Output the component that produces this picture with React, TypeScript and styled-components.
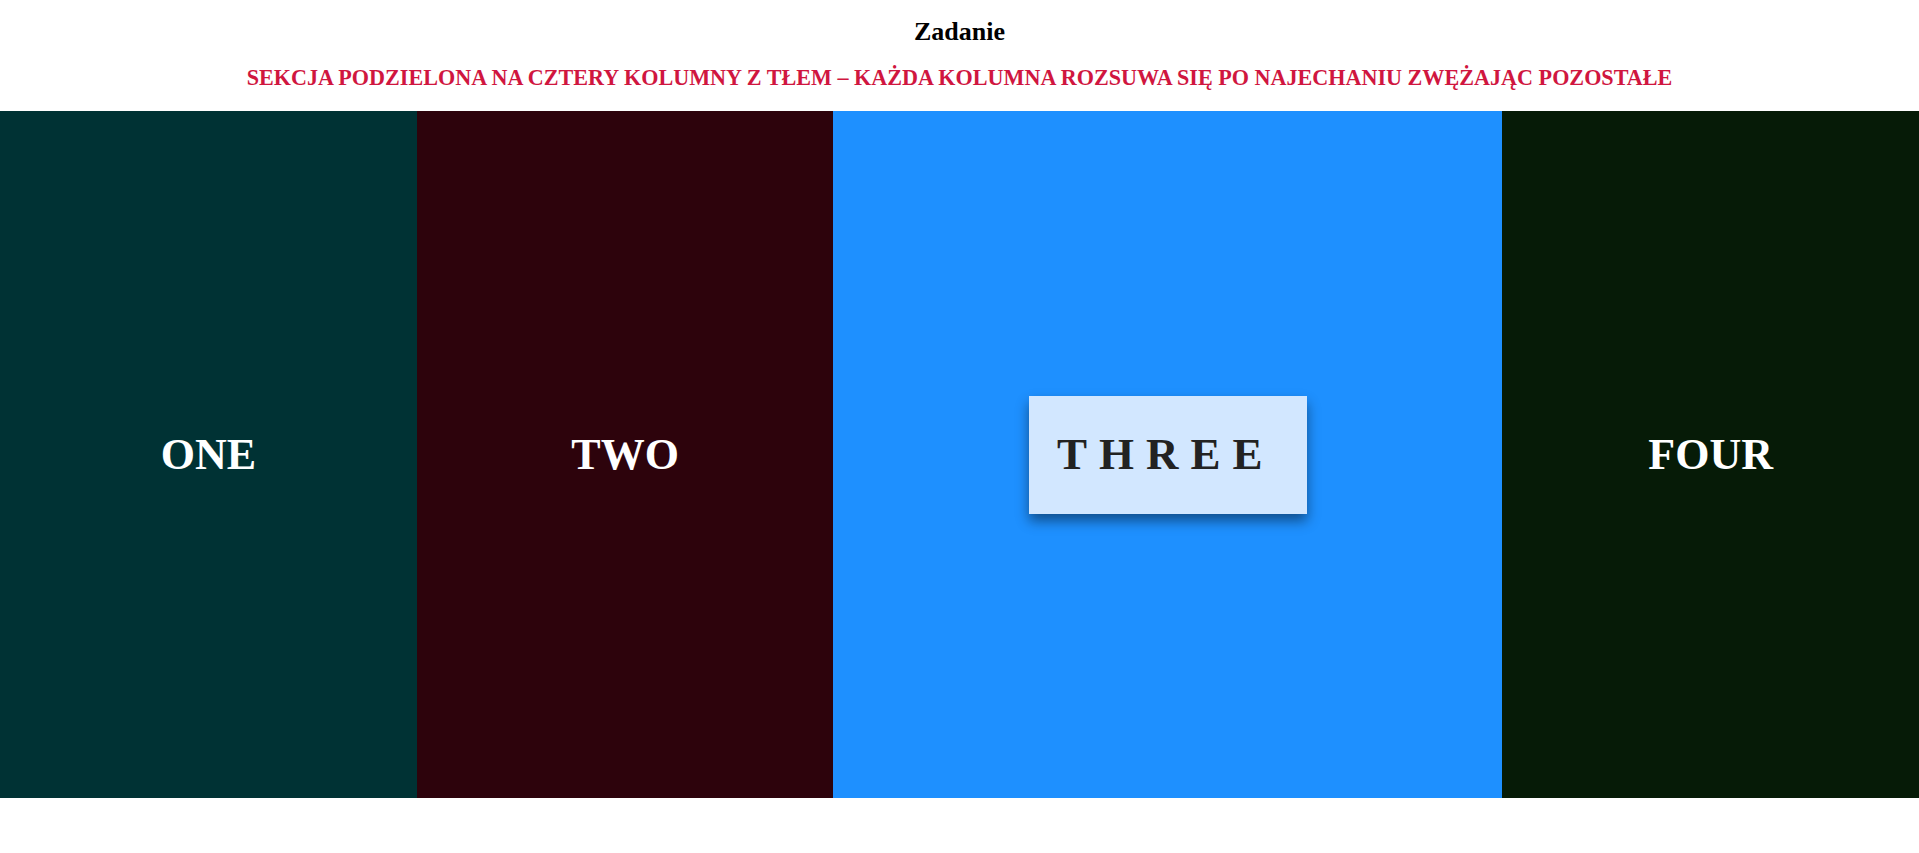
import React from "react";
import styled, { createGlobalStyle } from "styled-components";

const GlobalStyle = createGlobalStyle`
  html, body {
    margin: 0;
    padding: 0;
    background: #ffffff;
    font-family: "Liberation Serif", "Times New Roman", serif;
  }
`;

const Header = styled.header`
  display: flex;
  flex-direction: column;
  align-items: center;
  padding-top: 17px;
`;

const Title = styled.h1`
  margin: 0;
  font-size: 26px;
  font-weight: 700;
  color: #000;
  line-height: 1.15;
`;

const Subtitle = styled.h2`
  margin: 18px 0 21px;
  font-size: 22.15px;
  font-weight: 700;
  color: #d0163f;
  line-height: 1.15;
  text-transform: uppercase;
`;

const Section = styled.section`
  display: flex;
  height: 687px;
`;

const Column = styled.div<{ $bg: string; $grow: number }>`
  flex: ${(p) => p.$grow} 1 0;
  background: ${(p) => p.$bg};
  display: flex;
  align-items: center;
  justify-content: center;
  transition: flex 0.5s ease;
`;

const Label = styled.span`
  font-size: 44px;
  font-weight: 700;
  color: #ffffff;
  line-height: 1.15;
`;

const ActiveLabel = styled.span`
  display: block;
  background: #d2e7ff;
  color: #222222;
  font-size: 45px;
  font-weight: 700;
  line-height: 1.15;
  letter-spacing: 12px;
  padding: 33px 32px 33px 28px;
  box-shadow: 0 7px 12px rgba(0, 0, 0, 0.45);
`;

const columns = [
  { bg: "#003234", label: "ONE" },
  { bg: "#2d030c", label: "TWO" },
  { bg: "#1e90ff", label: "THREE", active: true },
  { bg: "#061b07", label: "FOUR" },
];

export default function App() {
  return (
    <>
      <GlobalStyle />
      <Header>
        <Title>Zadanie</Title>
        <Subtitle>
          Sekcja podzielona na cztery kolumny z tłem – każda kolumna rozsuwa się
          po najechaniu zwężając pozostałe
        </Subtitle>
      </Header>
      <Section>
        {columns.map((c) => (
          <Column key={c.label} $bg={c.bg} $grow={c.active ? 1.605 : 1}>
            {c.active ? (
              <ActiveLabel>{c.label}</ActiveLabel>
            ) : (
              <Label>{c.label}</Label>
            )}
          </Column>
        ))}
      </Section>
    </>
  );
}
